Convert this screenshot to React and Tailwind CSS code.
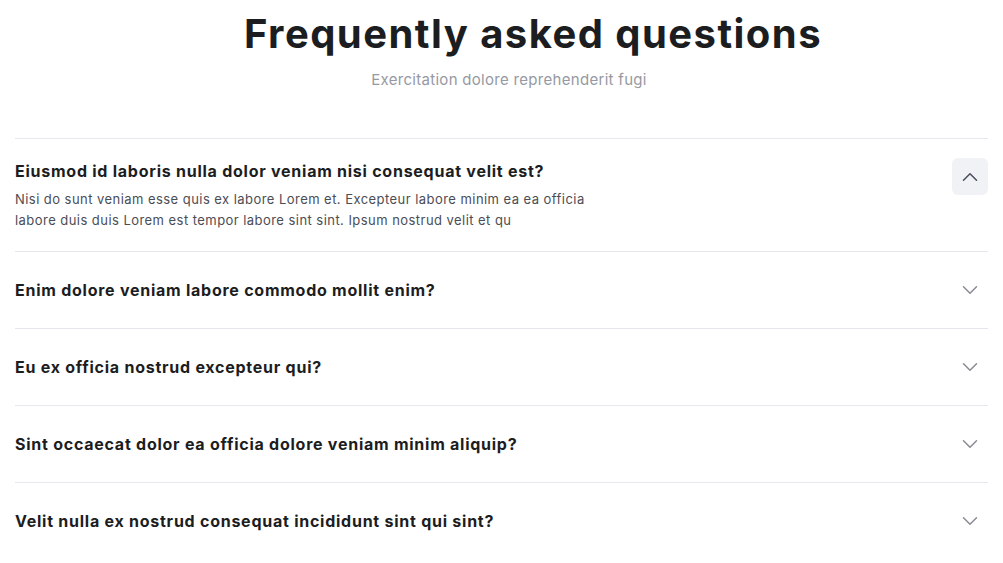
import React from "react";

const items = [
  {
    q: "Eiusmod id laboris nulla dolor veniam nisi consequat velit est?",
    a: "Nisi do sunt veniam esse quis ex labore Lorem et. Excepteur labore minim ea ea officia labore duis duis Lorem est tempor labore sint sint. Ipsum nostrud velit et qu",
    open: true,
  },
  { q: "Enim dolore veniam labore commodo mollit enim?" },
  { q: "Eu ex officia nostrud excepteur qui?" },
  { q: "Sint occaecat dolor ea officia dolore veniam minim aliquip?" },
  { q: "Velit nulla ex nostrud consequat incididunt sint qui sint?" },
];

function Chevron({ up }) {
  return (
    <svg width="26" height="26" viewBox="0 0 24 24" fill="none" stroke="currentColor" strokeWidth="1.4" strokeLinecap="round" strokeLinejoin="round">
      {up ? <path d="m18 15-6-6-6 6" /> : <path d="m6 9 6 6 6-6" />}
    </svg>
  );
}

export default function App() {
  return (
    <div className="min-h-[563px] bg-white px-[15px] font-['Inter',sans-serif]">
      <div className="pt-[8px] text-center">
        <h1 className="pl-[63px] text-[40px] font-bold leading-[52px] tracking-[1.45px] text-[#1c1d21]">
          Frequently asked questions
        </h1>
        <p className="mt-[9px] pl-[15px] text-[15px] leading-[22px] tracking-[0.3px] text-[#9699a3]">
          Exercitation dolore reprehenderit fugi
        </p>
      </div>
      <div className="mt-[47px] w-[973px]">
        {items.map((it, i) => (
          <div key={i} className="border-t border-[#e6e6ec]">
            {it.open ? (
              <div className="flex items-start justify-between pt-[19px] pb-[20px]">
                <div className="w-[600px]">
                  <h3 className="pt-[1px] text-[16px] font-bold leading-[24px] tracking-[0.75px] text-[#1c1d21]">{it.q}</h3>
                  <p className="mt-[6px] w-[590px] text-[13px] leading-[21px] tracking-[0.45px] text-[#4b4d55]">{it.a}</p>
                </div>
                <button className="flex h-[37px] w-[36px] items-center justify-center rounded-md bg-[#f1f2f5] text-[#4b5060]">
                  <Chevron up />
                </button>
              </div>
            ) : (
              <div className="flex h-[76px] items-center justify-between">
                <h3 className="text-[16px] font-bold leading-[24px] tracking-[0.75px] text-[#1c1d21]">{it.q}</h3>
                <div className="flex w-[36px] justify-center text-[#8a8d96]">
                  <Chevron />
                </div>
              </div>
            )}
          </div>
        ))}
      </div>
    </div>
  );
}
